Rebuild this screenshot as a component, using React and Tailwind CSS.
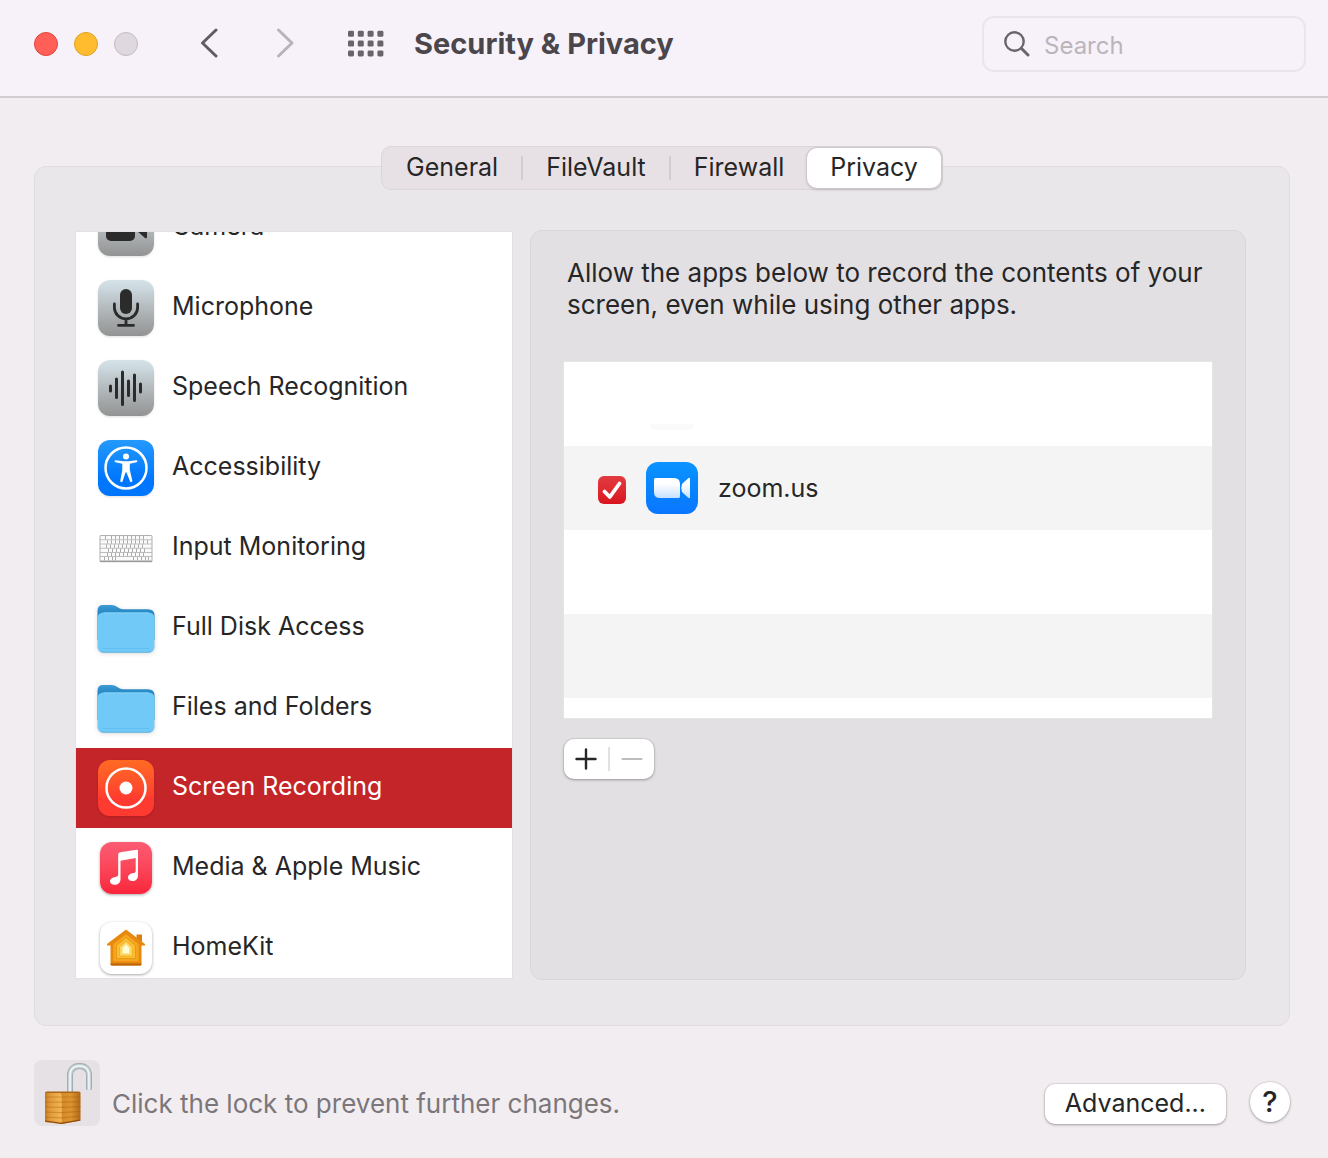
import { useState } from "react";
import clsx from "clsx";

const CameraIcon = () => (
  <svg viewBox="0 0 56 56" className="h-14 w-14">
    <rect x="8" y="16" width="29" height="25" rx="5" fill="#2b2b2b" />
    <path d="M39 31l8-7q2-1 2 1v12q0 2-2 1z" fill="#2b2b2b" />
  </svg>
);

const MicIcon = () => (
  <svg viewBox="0 0 56 56" className="h-14 w-14" fill="none" stroke="#2b2b2b" strokeWidth="2.8" strokeLinecap="round">
    <rect x="22" y="9" width="12" height="25" rx="6" fill="#2b2b2b" stroke="none" />
    <path d="M16.4 24v3.4a11.6 11.6 0 0 0 23.2 0V24M28 39v6M20.5 45.4h15" />
  </svg>
);

const SpeechIcon = () => (
  <svg viewBox="0 0 56 56" className="h-14 w-14" stroke="#2b2b2b" strokeWidth="3" strokeLinecap="round">
    <path d="M12.5 26v5M18.5 19v18.5M24.5 12v32.5M30.5 21v14.5M36.5 15v25.5M42.5 24v8" />
  </svg>
);

const AccessibilityIcon = () => (
  <svg viewBox="0 0 56 56" className="h-14 w-14">
    <circle cx="28" cy="28" r="20.5" fill="none" stroke="#fff" strokeWidth="2.5" />
    <circle cx="28" cy="16.5" r="3" fill="#fff" />
    <path
      d="M17.8 20.2L25.5 21.3H30.5L38.2 20.2A1 1 0 0 1 38.5 22.3L31.8 23.8V30L34.3 40.5A1.2 1.2 0 0 1 32 41.3L28.5 32.5H27.5L24.6 41.3A1.2 1.2 0 0 1 22.3 40.5L24.3 30V23.8L17.5 22.3A1 1 0 0 1 17.8 20.2Z"
      fill="#fff"
    />
  </svg>
);

const KEY_ROWS = [
  [7, 13, 17, 21, 25, 29, 33, 37, 41, 45],
  [9, 13, 17, 21, 25, 29, 33, 37, 41, 45, 49],
  [8, 12, 16, 20, 24, 28, 32, 36, 40, 44],
  [10, 14, 18, 22, 26, 30, 34, 38, 42, 46],
  [9, 13, 17, 21, 25, 29, 33, 37, 41, 45],
  [6, 10, 14, 17, 35, 39, 43, 47, 50],
];

const KeyboardIcon = () => (
  <svg viewBox="0 0 56 56" className="h-14 w-14">
    <rect x="1.5" y="15" width="53" height="27" rx="1.5" fill="#b0b0b0" />
    {KEY_ROWS.map((stops, row) => (
      <g key={row}>
        <rect x="2.5" y={16 + row * 4.2} width="51" height="3.4" fill="#fafafa" />
        {stops.map((x) => (
          <rect key={x} x={x} y={16 + row * 4.2} width="0.8" height="3.4" fill="#999" />
        ))}
      </g>
    ))}
    <path d="M2 41.7h52" stroke="#8d8d8d" strokeWidth="0.8" />
  </svg>
);

const FolderIcon = () => (
  <svg viewBox="0 0 56 56" className="h-14 w-14 overflow-visible drop-shadow-sm">
    <defs>
      <linearGradient id="folderBack" x1="0" y1="0" x2="0" y2="1">
        <stop offset="0" stopColor="#3a9bd5" />
        <stop offset="0.3" stopColor="#1f80bd" />
      </linearGradient>
    </defs>
    <path
      d="M-.5 10.5q0-5.500 5.500-5.500h8c3.500 0 5 1.200 7 2.600 2 1.300 3 1.700 5.500 1.700H50q6.500 0 6.500 6V40h-57z"
      fill="url(#folderBack)"
    />
    <rect x="-0.5" y="12.5" width="57" height="40" rx="5.5" fill="#70c9f7" />
    <path d="M5.5 12.9h45" stroke="#8fd8fb" strokeWidth="0.8" />
    <path d="M5 48.5h46" stroke="#5dbbec" strokeWidth="0.8" />
    <path d="M3 51.5q1 .7 3 .7h44q2 0 3-.7" stroke="#55a9d8" strokeWidth="0.8" fill="none" />
  </svg>
);

const RecordIcon = () => (
  <svg viewBox="0 0 56 56" className="h-14 w-14">
    <circle cx="28" cy="28" r="19.5" fill="none" stroke="#fff" strokeWidth="2.5" />
    <circle cx="28" cy="28" r="6.5" fill="#fff" />
  </svg>
);

const MusicIcon = () => (
  <svg viewBox="0 0 52 52" className="h-13 w-13" fill="#fff">
    <path d="M20.3 10.3L36.5 7.8Q38 7.6 38 9V33.5C38 37 35.8 39 32.4 39 29.5 39 28 37.4 28 35.4 28 33 29.8 31.9 32.5 31.3 35 30.8 35.7 30.5 35.7 28.5V16L20.5 18.8V37C20.5 40.8 18 42.8 14.6 42.8 11.8 42.8 10 41.4 10 39.3 10 37 11.7 35.8 14.5 35.2 17.3 34.6 18.2 34.4 18.2 32.3V12.5Q18.2 10.7 20.3 10.3Z" />
  </svg>
);

const HomeIcon = () => (
  <svg viewBox="0 0 52 52" className="h-13 w-13" strokeLinejoin="round">
    <path d="M36.5 12.5H42v10h-5.5z" fill="#d97f14" />
    <path d="M26 7.5L45 22v1.5h-3.5V42q0 1.5-1.5 1.5H12q-1.5 0-1.5-1.5V23.5H7V22z" fill="#e8890f" />
    <path d="M10.5 41.5V42q0 1.5 1.5 1.5h28q1.5 0 1.5-1.5v-.5z" fill="#b9640a" />
    <path d="M26 13l12 9.5v16H14v-16z" fill="#f5a51f" stroke="#f5a51f" strokeWidth="1.5" />
    <path d="M26 15.5l9.500 8V36.500h-19V23.500z" fill="#fbbd35" stroke="#e4940f" strokeWidth="0.8" />
    <path d="M26 19l6.500 6V34h-13V25z" fill="#fdd662" stroke="#f1ad25" strokeWidth="0.8" />
    <path d="M26 22l3.500 4v5.500h-7V26z" fill="#fffbd8" stroke="#fbe992" strokeWidth="1" />
  </svg>
);

const SHACKLE = "M36 33V15.5C36 9.500 39.500 6 45.500 6S55 9.500 55 15.500V29.500";

const PadlockIcon = () => (
  <svg viewBox="0 0 66 66" className="h-16.5 w-16.5">
    <defs>
      <linearGradient id="brassFront" x1="0" y1="0" x2="1" y2="0">
        <stop offset="0" stopColor="#c27a20" />
        <stop offset="0.3" stopColor="#e0993a" />
        <stop offset="1" stopColor="#f3b654" />
      </linearGradient>
      <linearGradient id="brassSide" x1="0" y1="0" x2="1" y2="0">
        <stop offset="0" stopColor="#d58a28" />
        <stop offset="0.5" stopColor="#dd9430" />
        <stop offset="1" stopColor="#b06815" />
      </linearGradient>
    </defs>
    <path d={SHACKLE} fill="none" stroke="#98a4a9" strokeWidth="6" />
    <path d={SHACKLE} fill="none" stroke="#bcc7cb" strokeWidth="4.6" />
    <path d={SHACKLE} fill="none" stroke="#dde6e9" strokeWidth="2.6" />
    <path d={SHACKLE} fill="none" stroke="#f7fafb" strokeWidth="1" />
    <path d="M11 33q0-1.5 1.5-1.5H45q1.5 0 1.5 1.5L27 35z" fill="#a7651a" />
    <path d="M11 33H27.5V64L13 62.5Q11 62.3 11 60.5Z" fill="url(#brassFront)" />
    <path d="M27.5 33H46.5V59Q46.5 60.5 45 61L27.5 64Z" fill="url(#brassSide)" />
    {[0, 1, 2, 3, 4].map((n) => (
      <path
        key={n}
        d={`M11 ${37 + n * 5}L27.5 ${37 + n * 5.2}L46.5 ${37 + n * 4.8}`}
        fill="none"
        stroke="#9c560d"
        strokeOpacity="0.35"
        strokeWidth="1.2"
      />
    ))}
    <path d="M11 61L27.5 63.4L46.5 60" fill="none" stroke="#8a480b" strokeWidth="1.2" />
  </svg>
);

const ZoomIcon = () => (
  <svg viewBox="0 0 52 52" className="h-13 w-13">
    <defs>
      <linearGradient id="lens" x1="0" y1="0" x2="0" y2="1">
        <stop offset="0.3" stopColor="#fff" />
        <stop offset="1" stopColor="#c6e0ff" />
      </linearGradient>
    </defs>
    <path d="M9.5 16H28Q34 16 34 22V34.5Q34 36 32.5 36H14Q8 36 8 30V17.5Q8 16 9.5 16Z" fill="url(#lens)" />
    <path d="M36 22L42 16.5Q44 15 44 17V35Q44 37 42 35.5L36 30Q34.500 26 36 22Z" fill="url(#lens)" />
  </svg>
);

const grayTile = "h-14 w-14 rounded-xl bg-linear-to-b from-[#d5e4ea] to-[#939393] shadow-sm";

const SERVICES = [
  { name: "Camera", Icon: CameraIcon, tile: grayTile },
  { name: "Microphone", Icon: MicIcon, tile: grayTile },
  { name: "Speech Recognition", Icon: SpeechIcon, tile: grayTile },
  {
    name: "Accessibility",
    Icon: AccessibilityIcon,
    tile: "h-14 w-14 rounded-xl bg-linear-to-b from-[#2499fb] to-[#0076ff] to-70% shadow-sm",
  },
  { name: "Input Monitoring", Icon: KeyboardIcon },
  { name: "Full Disk Access", Icon: FolderIcon },
  { name: "Files and Folders", Icon: FolderIcon },
  {
    name: "Screen Recording",
    Icon: RecordIcon,
    tile: "h-14 w-14 rounded-xl bg-linear-to-b from-[#ff6a22] to-[#ff3a30] to-70% shadow-sm",
  },
  {
    name: "Media & Apple Music",
    Icon: MusicIcon,
    tile: "h-13 w-13 rounded-xl bg-linear-to-b from-[#fb5c74] to-[#fa233b] shadow-[0_1px_3px_rgba(0,0,0,0.35)]",
  },
  { name: "HomeKit", Icon: HomeIcon, tile: "h-13 w-13 rounded-xl bg-white shadow-[0_1px_3px_rgba(0,0,0,0.35)]" },
];

const TABS = ["General", "FileVault", "Firewall", "Privacy"];

const Toolbar = () => (
  <header className="flex h-[98px] shrink-0 items-center border-b-2 border-[#d3ccd3] bg-[#f7f2f9] pr-[22px] pb-2 pl-[34px]">
    <div className="flex gap-4">
      <button aria-label="Close" className="h-6 w-6 rounded-full border border-[#e0443e] bg-[#ff5f57]" />
      <button aria-label="Minimize" className="h-6 w-6 rounded-full border border-[#dfa023] bg-[#febc2e]" />
      <button aria-label="Zoom" disabled className="h-6 w-6 rounded-full border border-[#c2bbc1] bg-[#dfd9df]" />
    </div>
    <button aria-label="Back" className="ml-15">
      <svg viewBox="0 0 24 32" className="h-8 w-6" fill="none" stroke="#625c62" strokeWidth="3" strokeLinecap="round" strokeLinejoin="round">
        <path d="M18 2L4.5 15L18 28" />
      </svg>
    </button>
    <button aria-label="Forward" disabled className="ml-13">
      <svg viewBox="0 0 24 32" className="h-8 w-6" fill="none" stroke="#b9b2b9" strokeWidth="3" strokeLinecap="round" strokeLinejoin="round">
        <path d="M4.5 2L18 15L4.5 28" />
      </svg>
    </button>
    <button aria-label="Show All" className="ml-[50px]">
      <svg viewBox="0 0 36 28" className="h-7 w-9" fill="#6a646a">
        {[0, 1, 2].map((row) =>
          [0, 1, 2, 3].map((col) => (
            <rect key={`${row}-${col}`} x={col * 9.8} y={row * 9.8 + 0.8} width="6" height="6" rx="1.4" />
          ))
        )}
      </svg>
    </button>
    <h1 className="ml-[30px] text-[29px] leading-8 font-bold text-[#4b464b]">Security &amp; Privacy</h1>
    <label className="ml-auto flex h-14 w-[324px] items-center gap-3.5 rounded-xl border-2 border-[#ebe5eb] pl-5">
      <svg viewBox="0 0 26 26" className="h-[26px] w-[26px] shrink-0" fill="none" stroke="#6b646b" strokeWidth="2.4" strokeLinecap="round">
        <circle cx="10.5" cy="10.5" r="9.2" />
        <path d="M17.5 17.5L24 24" strokeWidth="3" />
      </svg>
      <input
        type="search"
        aria-label="Search"
        placeholder="Search"
        className="w-full min-w-0 bg-transparent pt-1 text-[24px] leading-8 outline-none placeholder:text-[#bbb5bb]"
      />
    </label>
  </header>
);

const Tabs = ({ active, onChange }) => (
  <div
    role="tablist"
    className="relative z-10 -mb-6 flex h-11 self-center rounded-[10px] border border-[#dcd6db] bg-[#e7e1e5] px-px"
  >
    {TABS.map((tab, i) => (
      <button
        key={tab}
        role="tab"
        aria-selected={tab === active}
        onClick={() => onChange(tab)}
        className="flex items-center"
      >
        <span
          className={clsx(
            "flex h-10 items-center rounded-[10px] px-[23px] pb-0.5",
            tab === active && "bg-white shadow-[0_0_0_1px_#cfc9ce,0_1px_3px_rgba(0,0,0,0.3)]"
          )}
        >
          {tab}
        </span>
        {tab !== active && TABS[i + 1] !== active && <span className="h-6 w-0.5 bg-[#d3cdd2]" />}
      </button>
    ))}
  </div>
);

const ServiceList = ({ selected, onSelect }) => (
  <div className="my-px w-[438px] shrink-0 overflow-hidden border border-[#e3e1e3] bg-white">
    {/* scrolled down a little, so the first row is half hidden */}
    <ul className="-mt-11">
      {SERVICES.map(({ name, Icon, tile }) => (
        <li key={name}>
          <button
            onClick={() => onSelect(name)}
            className={clsx(
              "flex h-20 w-full items-center gap-[18px] pl-[22px] text-left",
              name === selected && "bg-[#c42529] text-white"
            )}
          >
            <span className="flex w-14 justify-center">
              <span className={tile}>
                <Icon />
              </span>
            </span>
            <span className="pb-1">{name}</span>
          </button>
        </li>
      ))}
    </ul>
  </div>
);

const AppList = () => {
  const [allowed, setAllowed] = useState(true);

  return (
    <ul className="h-[358px] overflow-hidden border border-[#e6e5e6] bg-white">
      <li className="flex h-21 items-end pb-4 pl-[86px]">
        <span className="h-1.5 w-11 rounded-b-lg bg-[#fafafa]" />
      </li>
      <li className="h-21 bg-[#f4f4f4]">
        <label className="flex h-full items-center pl-[34px]">
          <span className="relative mt-1 h-7 w-7">
            <input
              type="checkbox"
              checked={allowed}
              onChange={(event) => setAllowed(event.target.checked)}
              className="peer block h-7 w-7 appearance-none rounded-md border border-[#ccc] bg-white checked:border-0 checked:bg-linear-to-b checked:from-[#e23a40] checked:to-[#d9131d]"
            />
            <svg
              viewBox="0 0 28 28"
              className="pointer-events-none absolute inset-0 hidden h-7 w-7 peer-checked:block"
              fill="none"
              stroke="#fff"
              strokeWidth="3.8"
              strokeLinecap="round"
              strokeLinejoin="round"
            >
              <path d="M6.5 15.5L11.8 21L21.5 7.5" />
            </svg>
          </span>
          <span className="ml-5 rounded-xl bg-linear-to-b from-[#0b93ff] to-[#0a76ff]">
            <ZoomIcon />
          </span>
          <span className="ml-5">zoom.us</span>
        </label>
      </li>
      <li className="h-21" />
      <li className="h-21 bg-[#f4f4f4]" />
    </ul>
  );
};

const raised = "bg-white shadow-[0_0_0_1px_rgba(0,0,0,0.06),0_1px_3px_rgba(0,0,0,0.3)]";

const App = () => {
  const [tab, setTab] = useState("Privacy");
  const [service, setService] = useState("Screen Recording");

  return (
    <div className="flex h-screen flex-col bg-[#f2edf1] font-['Inter',sans-serif] text-[25px] leading-8 text-[#272627]">
      <Toolbar />

      <main className="flex min-h-0 flex-1 flex-col pt-12 pr-[38px] pl-[34px]">
        <Tabs active={tab} onChange={setTab} />

        <section className="flex min-h-0 flex-1 gap-[17px] rounded-xl border border-[#e0dce0] bg-[#e9e7ea] pt-[63px] pr-[43px] pb-[45px] pl-10">
          <ServiceList selected={service} onSelect={setService} />

          <div className="min-w-0 flex-1 rounded-xl border border-[#d9d7da] bg-[#e2e0e3] px-8 pt-[26px]">
            <p className="mb-10 pl-1 text-[26px] leading-8">
              Allow the apps below to record the contents of your screen, even while using other apps.
            </p>
            <AppList />
            <div className={clsx("mt-5 ml-px flex h-10 w-[90px] items-center rounded-[10px]", raised)}>
              <button aria-label="Add app" className="flex flex-1 justify-center">
                <svg viewBox="0 0 22 22" className="h-[22px] w-[22px]" stroke="#272627" strokeWidth="2.4" strokeLinecap="round">
                  <path d="M11 1.5V20.5M1.5 11H20.5" />
                </svg>
              </button>
              <span className="h-6 w-0.5 bg-[#e2e0e2]" />
              <button aria-label="Remove app" disabled className="flex flex-1 justify-center">
                <svg viewBox="0 0 22 22" className="h-[22px] w-[22px]" stroke="#bebcbe" strokeWidth="2.2" strokeLinecap="round">
                  <path d="M1.5 11H20.5" />
                </svg>
              </button>
            </div>
          </div>
        </section>
      </main>

      <footer className="flex h-[132px] shrink-0 items-center pr-[38px] pl-[34px]">
        <button aria-label="Lock" className="mt-0.5 rounded-lg bg-[#e6e1e5]">
          <PadlockIcon />
        </button>
        <p className="mt-6 ml-3 text-[26px] leading-8 text-[#7b767a]">Click the lock to prevent further changes.</p>
        <button className={clsx("mt-6 ml-auto h-10 rounded-[10px] px-5 pb-0.5", raised)}>Advanced...</button>
        <button
          aria-label="Help"
          className={clsx("mt-5 ml-6 h-10 w-10 rounded-full text-[29px] leading-8 font-medium", raised)}
        >
          ?
        </button>
      </footer>
    </div>
  );
};

export default App;
